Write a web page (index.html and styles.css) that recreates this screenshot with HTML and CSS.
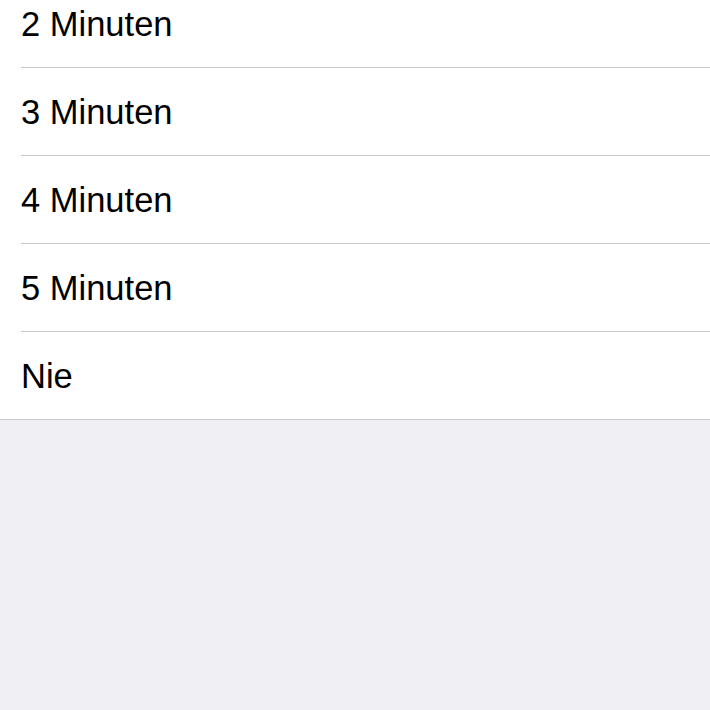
FILE: index.html
```html
<!DOCTYPE html>
<html>

<head>
    <title>Automatische Sperre</title>
    <link rel="stylesheet" href="styles.css">
</head>

<body>

    <ul class="option-list">
        <li class="option"><div class="option-cell">2 Minuten</div></li>
        <li class="option"><div class="option-cell">3 Minuten</div></li>
        <li class="option"><div class="option-cell">4 Minuten</div></li>
        <li class="option"><div class="option-cell">5 Minuten</div></li>
        <li class="option"><div class="option-cell">Nie</div></li>
    </ul>

</body>

</html>
```

FILE: styles.css
```css
body {
    font-family: "Liberation Sans", Arial, sans-serif;
    background: #efeff4;
    margin: 0;
    overflow: hidden;
}

.option-list {
    list-style: none;
    margin: -20px 0 0 0;
    padding: 0;
    background: white;
    border-bottom: 1px solid #c8c7cc;
}

.option {
    padding-left: 21px;
}

.option-cell {
    display: flex;
    align-items: center;
    box-sizing: border-box;
    height: 88px;
    padding-top: 2px;
    border-bottom: 1px solid #c8c7cc;
    font-size: 34.5px;
    color: black;
}

.option:last-child .option-cell {
    height: 87px;
    border-bottom: none;
}
```
